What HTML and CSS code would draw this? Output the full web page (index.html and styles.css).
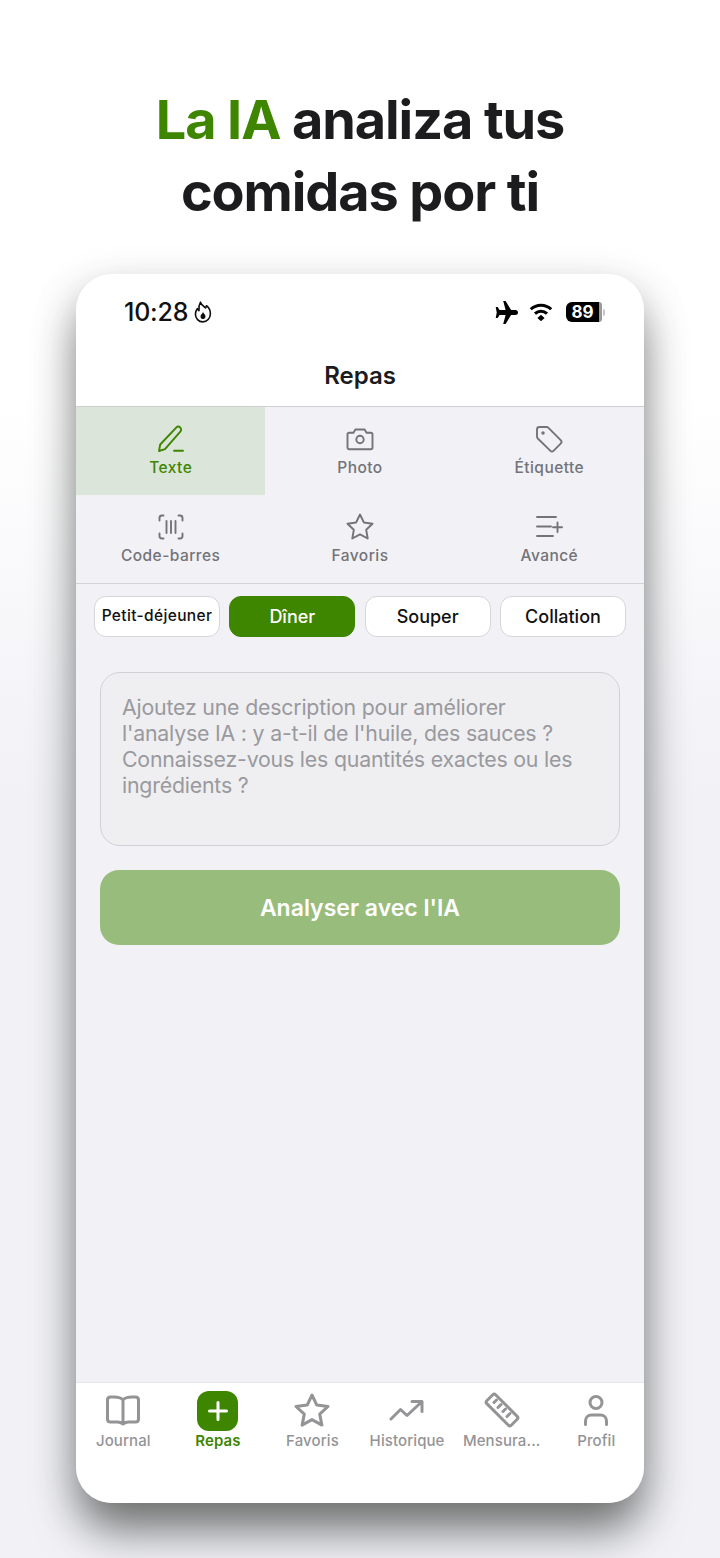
FILE: index.html
```html
<!DOCTYPE html>
<html lang="fr">
<head>
<meta charset="utf-8">
<title>Repas</title>
<link rel="stylesheet" href="styles.css">
</head>
<body>
<main class="page">
  <h1 class="headline"><span class="accent">La IA</span> analiza tus<br>comidas por ti</h1>
  <section class="phone">
    <div class="status">
      <div class="status-left"><span class="time">10:28</span>
        <svg class="flame" viewBox="0 0 18 22" fill="none" stroke="#111" stroke-width="1.600" stroke-linejoin="round"><path d="M6.500 1.200c.8 2.800 3 3.600 5 5.800.6-.8.9-1.500 1-2.300 2.400 2 3.900 4.800 3.900 8 0 4.700-3.400 8.200-7.600 8.200s-7.400-3.500-7.400-7.800c0-2.200.8-3.900 2-5.500.4 1.100.9 1.700 1.600 2.100-.5-3-.1-5.700 1.500-8.500z"/><path fill="#111" stroke="none" d="M9 11c.4 1.300 2.500 2.300 2.500 4.400 0 1.500-1.100 2.600-2.500 2.600s-2.500-1.100-2.500-2.600C6.500 13.700 8.400 12.800 9 11z"/></svg>
      </div>
      <div class="status-right">
        <svg class="plane" viewBox="0 0 24 24" fill="#000"><path d="M9.800 1h2.300l5.300 8.600h4.300c1.300 0 2.300 1.100 2.300 2.400s-1 2.400-2.300 2.400h-4.300L12.100 23H9.800l2.300-8.600H6.300l-1.800 2.900H2.600L3.600 12l-1-5.300h1.900l1.800 2.900h5.800z"/></svg>
        <svg class="wifi" viewBox="0 0 24 18" fill="none" stroke="#000" stroke-width="3"><path d="M1.800 6.300a14.600 14.600 0 0 1 20.400 0"/><path d="M6 10.600a8.600 8.600 0 0 1 12 0"/><path fill="#000" stroke="none" d="M12 11.800l3.600 3.200-3.600 3.200-3.600-3.200z"/></svg>
        <div class="battery"><span class="battery-level">89</span><span class="battery-rest"></span><span class="battery-cap"></span></div>
      </div>
    </div>
    <header class="title-bar">Repas</header>
    <nav class="modes">
      <div class="mode mode-active">
        <svg class="mode-icon" viewBox="0 0 28 28" fill="none" stroke="currentColor" stroke-width="1.900" stroke-linecap="round" stroke-linejoin="round"><path d="M2 26l1.200-6.500L19.200 2.700c1.100-1.200 2.800-1.300 4-.2 1.200 1.100 1.200 2.900.1 4.100L8 24.200z"/><path d="M17 25.800h9"/></svg>
        <span>Texte</span>
      </div>
      <div class="mode">
        <svg class="mode-icon" viewBox="0 0 28 28" fill="none" stroke="currentColor" stroke-width="1.900" stroke-linecap="round" stroke-linejoin="round"><path d="M1.500 9.500c0-1 .8-1.700 1.700-1.700h4.300l1.900-3.300h9.200l1.900 3.300h4.300c.9 0 1.700.7 1.700 1.700v13c0 1-.8 1.700-1.700 1.700H3.200c-.9 0-1.700-.7-1.700-1.700z"/><circle cx="14" cy="14.500" r="3.700"/></svg>
        <span>Photo</span>
      </div>
      <div class="mode">
        <svg class="mode-icon" viewBox="0 0 28 28" fill="none" stroke="currentColor" stroke-width="1.900" stroke-linecap="round" stroke-linejoin="round"><path d="M2 4.500C2 3 3 2 4.500 2h7c.8 0 1.500.3 2 .8l12.200 12.300c1 1 1 2.500 0 3.500l-7 7c-1 1-2.500 1-3.500 0L2.800 13.500c-.5-.5-.8-1.200-.8-2z"/><circle cx="8" cy="8" r=".8" fill="currentColor"/></svg>
        <span>Étiquette</span>
      </div>
      <div class="mode">
        <svg class="mode-icon" viewBox="0 0 28 28" fill="none" stroke="currentColor" stroke-width="1.900" stroke-linecap="round" stroke-linejoin="round"><path d="M6.500 2.500H5C3.500 2.500 2.500 3.500 2.500 5v2.500M21.500 2.500H23c1.500 0 2.500 1 2.500 2.500v2.500M6.500 25.500H5c-1.500 0-2.500-1-2.500-2.500v-2.500M21.500 25.500H23c1.500 0 2.500-1 2.500-2.500v-2.500"/><path d="M9.500 8v12M14 8v12M18.500 8v12"/></svg>
        <span>Code-barres</span>
      </div>
      <div class="mode">
        <svg class="mode-icon" viewBox="0 0 28 28" fill="none" stroke="currentColor" stroke-width="1.900" stroke-linecap="round" stroke-linejoin="round"><path d="M14 1.500l3.900 8 8.600 1.200-6.300 6.100 1.500 8.700-7.700-4.100-7.700 4.100 1.500-8.700-6.300-6.100 8.600-1.200z"/></svg>
        <span>Favoris</span>
      </div>
      <div class="mode">
        <svg class="mode-icon" viewBox="0 0 28 28" fill="none" stroke="currentColor" stroke-width="1.900" stroke-linecap="round" stroke-linejoin="round"><path d="M2 4h19M2 13.500h14M2 23h16M22.500 9.500v9.500M18 14.300h9"/></svg>
        <span>Avancé</span>
      </div>
    </nav>
    <div class="chips">
      <div class="chip chip-small">Petit-déjeuner</div>
      <div class="chip chip-active">Dîner</div>
      <div class="chip">Souper</div>
      <div class="chip">Collation</div>
    </div>
    <div class="composer">
      <div class="field">Ajoutez une description pour améliorer l'analyse IA : y a-t-il de l'huile, des sauces ? Connaissez-vous les quantités exactes ou les ingrédients ?</div>
      <div class="analyze">Analyser avec l'IA</div>
    </div>
    <footer class="tabs">
      <div class="tab">
        <svg class="tab-icon" viewBox="0 0 36 36" fill="none" stroke="currentColor" stroke-width="3" stroke-linecap="round" stroke-linejoin="round"><path d="M18 8C16 5.500 13 5 9 5H5.500C3.500 5 2.500 6 2.500 8v19c0 2 1 3 3 3h7c2.500 0 4 .7 5.500 2 1.500-1.300 3-2 5.500-2h7c2 0 3-1 3-3V8c0-2-1-3-3-3H27c-4 0-7 .5-9 3zM18 8v24"/></svg>
        <span>Journal</span>
      </div>
      <div class="tab tab-active">
        <div class="add"><svg viewBox="0 0 24 24" fill="none" stroke="#fff" stroke-width="3" stroke-linecap="round"><path d="M12 3.500v17M3.500 12h17"/></svg></div>
        <span>Repas</span>
      </div>
      <div class="tab">
        <svg class="tab-icon" viewBox="0 0 36 36" fill="none" stroke="currentColor" stroke-width="3" stroke-linecap="round" stroke-linejoin="round"><path d="M18 3l4.800 10.100 11.200 1.400-8.300 7.600 2.200 11-9.900-5.500-9.900 5.500 2.200-11L2 14.500l11.200-1.400z"/></svg>
        <span>Favoris</span>
      </div>
      <div class="tab">
        <svg class="tab-icon" viewBox="0 0 36 36" fill="none" stroke="currentColor" stroke-width="3" stroke-linecap="round" stroke-linejoin="round"><path d="M2 27l9.500-9.500 6.500 6L32.500 10M23 9.500h10v10"/></svg>
        <span>Historique</span>
      </div>
      <div class="tab">
        <svg class="tab-icon" viewBox="0 0 36 36" fill="none" stroke="currentColor" stroke-width="3" stroke-linecap="round" stroke-linejoin="round"><path d="M2.800 8.800l6-6c.8-.8 2-.8 2.800 0l21.600 21.600c.8.800.8 2 0 2.800l-6 6c-.8.800-2 .8-2.800 0L2.800 11.600c-.8-.8-.8-2 0-2.800z"/><path d="M12.500 8l-2.500 2.500M17 12.500l-3 3M21.500 17L19 19.500M26 21.500l-3 3"/></svg>
        <span>Mensura...</span>
      </div>
      <div class="tab">
        <svg class="tab-icon" viewBox="0 0 36 36" fill="none" stroke="currentColor" stroke-width="3" stroke-linecap="round" stroke-linejoin="round"><circle cx="18" cy="10.500" r="6"/><path d="M7.500 32.500v-3.500c0-3.500 2.500-6 6-6h9c3.500 0 6 2.500 6 6v3.500"/></svg>
        <span>Profil</span>
      </div>
    </footer>
  </section>
</main>
</body>
</html>
```
FILE: styles.css
```css
* { box-sizing: border-box; }
html, body { margin: 0; padding: 0; }
body {
  width: 720px;
  height: 1558px;
  overflow: hidden;
  font-family: Inter, "Noto Sans", sans-serif;
  background: linear-gradient(180deg, #ffffff 0, #ffffff 400px, #f1f1f6 800px, #f1f1f6 100%);
}
.page { display: flex; flex-direction: column; align-items: center; }
.headline {
  margin: 84px 0 0;
  height: 190px;
  text-align: center;
  font-size: 54px;
  line-height: 72px;
  font-weight: 700;
  letter-spacing: -1.100px;
  color: #1c1c1e;
}
.accent { color: #3e8500; }
.phone {
  width: 568px;
  height: 1229px;
  display: flex;
  flex-direction: column;
  background: #f1f1f6;
  border-radius: 36px;
  box-shadow: 0 32px 46px -6px rgba(50, 55, 50, 0.6), 0 14px 42px rgba(50, 50, 50, 0.26);
}
.status {
  height: 76px;
  flex: none;
  padding: 0 39px 0 48px;
  display: flex;
  justify-content: space-between;
  align-items: center;
  background: #fff;
  border-radius: 36px 36px 0 0;
}
.status-left { display: flex; align-items: center; gap: 6px; }
.time { font-size: 25px; font-weight: 500; color: #111; letter-spacing: -0.2px; }
.flame { width: 18px; height: 22px; }
.status-right { display: flex; align-items: center; }
.plane { width: 25px; height: 25px; }
.wifi { width: 24px; height: 18px; margin-left: 11px; }
.battery { display: flex; align-items: center; margin-left: 13px; }
.battery-level {
  width: 33px;
  height: 20px;
  background: #000;
  border-radius: 6px 0 0 6px;
  color: #fff;
  font-size: 17px;
  line-height: 20px;
  font-weight: 700;
  text-align: center;
}
.battery-rest { width: 3px; height: 20px; background: #9a9a9a; border-radius: 0 5px 5px 0; }
.battery-cap { width: 2px; height: 7px; margin-left: 1px; background: #c4c4c4; border-radius: 0 2px 2px 0; }
.title-bar {
  height: 57px;
  flex: none;
  background: #fff;
  border-bottom: 1px solid #cfcfd2;
  text-align: center;
  font-size: 24px;
  line-height: 52px;
  font-weight: 600;
  color: #1c1c1e;
}
.modes {
  flex: none;
  display: grid;
  grid-template-columns: repeat(3, 1fr);
  grid-auto-rows: 88px;
  height: 177px;
  border-bottom: 1px solid #d4d4d8;
}
.mode {
  display: flex;
  flex-direction: column;
  align-items: center;
  padding-top: 18px;
  color: #737378;
  font-size: 15.500px;
  line-height: 20px;
  font-weight: 500;
  letter-spacing: 0.45px;
}
.mode-icon { width: 28px; height: 28px; margin-bottom: 5px; }
.mode-active { background: #dce5d9; color: #3e8500; }
.chips {
  flex: none;
  display: grid;
  grid-template-columns: repeat(4, 126px);
  column-gap: 9.330px;
  padding: 12px 18px 0;
  height: 53px;
}
.chip {
  height: 41px;
  background: #fff;
  border: 1px solid #d6d6da;
  border-radius: 12px;
  display: flex;
  align-items: center;
  justify-content: center;
  font-size: 18px;
  font-weight: 500;
  color: #111;
}
.chip-small { font-size: 15.500px; letter-spacing: 0.35px; white-space: nowrap; padding-bottom: 2px; }
.chip-active { background: #3e8500; border-color: #3e8500; color: #fff; }
.composer { flex: none; padding: 35px 24px 0; display: flex; flex-direction: column; gap: 24px; }
.field {
  height: 174px;
  background: #efeff1;
  border: 1px solid #d2d2d6;
  border-radius: 20px;
  padding: 21px 21px 0;
  font-size: 21.300px;
  line-height: 26px;
  letter-spacing: -0.19px;
  color: #99999e;
}
.analyze {
  height: 75px;
  background: #98bc7c;
  border-radius: 19px;
  text-align: center;
  font-size: 23px;
  line-height: 76px;
  font-weight: 600;
  color: #fff;
}
.tabs {
  margin-top: auto;
  height: 121px;
  flex: none;
  display: grid;
  grid-template-columns: repeat(6, 94.600px);
  padding-top: 7px;
  background: #fff;
  border-top: 1px solid #e6e6ea;
  border-radius: 0 0 36px 36px;
}
.tab {
  display: flex;
  flex-direction: column;
  align-items: center;
  color: #949496;
  font-size: 15px;
  line-height: 20px;
  font-weight: 500;
  letter-spacing: 0.1px;
  white-space: nowrap;
}
.tab-icon { width: 36px; height: 36px; margin: 2px 0 3px; }
.tab-active { color: #3e8500; font-weight: 600; }
.add {
  width: 41px;
  height: 40px;
  margin-top: 1px;
  border-radius: 12px;
  background: #3e8500;
  display: flex;
  align-items: center;
  justify-content: center;
}
.add svg { width: 24px; height: 24px; }
```
